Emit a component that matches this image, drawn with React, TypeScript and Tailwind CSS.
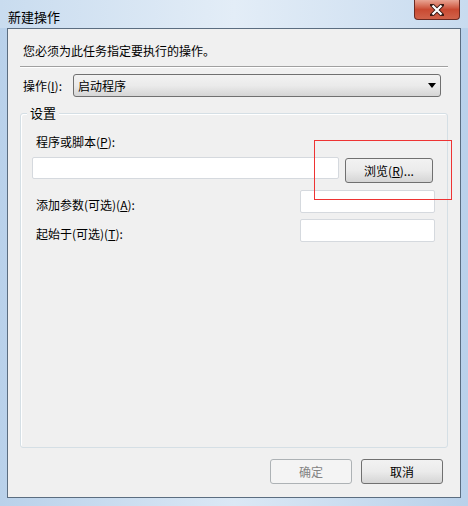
import React from "react";

const font = { fontFamily: '"Noto Sans CJK SC", "Liberation Sans", sans-serif' };

function Field({ className }: { className: string }) {
  return <div className={"shrink-0 bg-white border border-[#d5d9de] rounded-[2px] " + className} />;
}

export default function App() {
  return (
    <div
      className="relative w-[468px] h-[506px] flex flex-col bg-gradient-to-r from-[#b9d1ea] via-[#dbe8f5] to-[#b9d1ea] text-[12px] text-black overflow-hidden"
      style={font}
    >
      {/* title bar */}
      <div className="shrink-0 h-[28px] flex items-start justify-between bg-gradient-to-r from-[#c9dcef] via-[#e3edf7] to-[#c8dbef]">
        <span className="pl-[8px] pt-[8px] leading-[18px] text-[13px]">新建操作</span>
        <div className="mr-[8px] w-[46px] h-[20px] rounded-b-[4px] border border-t-0 border-[#6b2a22] bg-gradient-to-b from-[#e8a493] via-[#c94a32] to-[#d0624a] flex items-center justify-center">
          <svg width="14" height="12" viewBox="0 0 14 12">
            <path d="M2 1 L12 11 M12 1 L2 11" stroke="#3a1a14" strokeWidth="4" strokeLinecap="square" />
            <path d="M2.5 1.5 L11.5 10.5 M11.5 1.5 L2.5 10.5" stroke="#ffffff" strokeWidth="2.2" />
          </svg>
        </div>
      </div>

      {/* client area */}
      <div className="mx-[7px] mb-[8px] flex-1 flex flex-col bg-[#f0f0f0] border border-[#5b6d80]">
        <p className="shrink-0 h-[16px] pl-[15px] mt-[14px] leading-[16px]">您必须为此任务指定要执行的操作。</p>
        <div className="shrink-0 mx-[12px] mt-[7px] h-[2px] border-t border-[#a0a0a0] border-b-white border-b" />

        <div className="shrink-0 h-[23px] flex items-center mt-[6px] pl-[15px] pr-[19px]">
          <span className="w-[50px] leading-[16px]">
            操作(<span className="underline">I</span>):
          </span>
          <div className="flex-1 h-[23px] flex items-center justify-between px-[4px] rounded-[3px] border border-[#707070] bg-gradient-to-b from-[#f2f2f2] via-[#ebebeb] to-[#d5d5d5]">
            <span className="leading-[16px]">启动程序</span>
            <svg width="8" height="5" viewBox="0 0 8 5">
              <path d="M0 0 H8 L4 5 Z" fill="#000" />
            </svg>
          </div>
        </div>

        {/* group box */}
        <div className="relative shrink-0 mx-[12px] mt-[16px] h-[335px] border border-[#d5dfe5] rounded-[3px] shadow-[inset_1px_1px_0_#ffffff]">
          <span className="absolute -top-[9px] left-[6px] px-[3px] bg-[#f0f0f0] leading-[16px] text-[13px]">设置</span>

          <div className="h-[16px] pl-[15px] mt-[20px] leading-[16px]">
            程序或脚本(<span className="underline">P</span>):
          </div>
          <div className="flex items-start mt-[7px] pl-[11px] pr-[12px] gap-[6px]">
            <Field className="w-[307px] h-[22px]" />
            <button className="w-[88px] h-[25px] rounded-[3px] border border-[#707070] bg-gradient-to-b from-[#f2f2f2] via-[#ebebeb] to-[#d5d5d5] text-[12px] leading-[16px] mt-[1px]">
              浏览(<span className="underline">R</span>)...
            </button>
          </div>

          <div className="h-[23px] flex items-center justify-between mt-[7px] pl-[15px] pr-[12px]">
            <span className="leading-[16px] mt-[6px]">
              添加参数(可选)(<span className="underline">A</span>):
            </span>
            <Field className="w-[135px] h-[23px]" />
          </div>
          <div className="h-[23px] flex items-center justify-between mt-[6px] pl-[15px] pr-[12px]">
            <span className="leading-[16px] mt-[6px]">
              起始于(可选)(<span className="underline">T</span>):
            </span>
            <Field className="w-[135px] h-[23px]" />
          </div>
        </div>

        <div className="shrink-0 flex justify-end gap-[9px] mt-[11px] pr-[17px]">
          <button className="w-[82px] h-[25px] rounded-[3px] border border-[#adb2b5] bg-[#f4f4f4] text-[#838383] text-[12px] leading-[16px]">
            确定
          </button>
          <button className="w-[82px] h-[25px] rounded-[3px] border border-[#707070] bg-gradient-to-b from-[#f2f2f2] via-[#ebebeb] to-[#d5d5d5] text-[12px] leading-[16px]">
            取消
          </button>
        </div>
      </div>

      {/* annotation rectangle */}
      <div className="absolute left-[314px] top-[140px] w-[138px] h-[60px] border border-[#ee3333] pointer-events-none" />
    </div>
  );
}
